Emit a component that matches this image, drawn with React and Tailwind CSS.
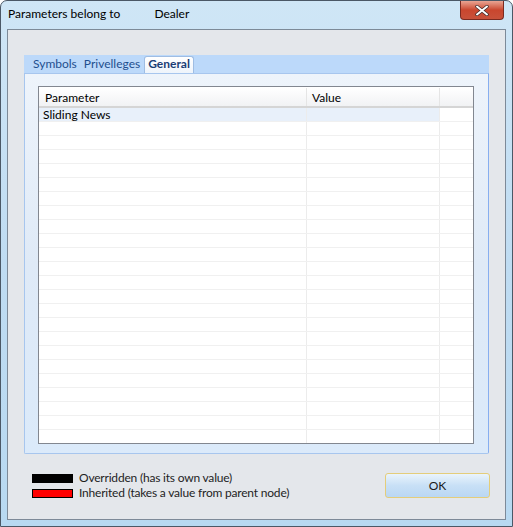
import React from 'react';

const rows = Array.from({ length: 24 }, (_, i) => i);

export default function App() {
  return (
    <div className="w-[513px] h-[527px] relative overflow-hidden rounded-t-[7px] border border-[#4b5866] bg-gradient-to-b from-[#cfe6f6] via-[#bfdcf2] to-[#b8d9f1] font-['Lato',sans-serif] text-[12px] text-black">
      {/* title bar */}
      <div className="h-[28px] flex items-center pl-[7px] pb-[2px]">
        <span>Parameters belong to</span>
        <span className="ml-[34px]">Dealer</span>
      </div>
      <div className="absolute right-[8px] top-0 w-[44px] h-[19px] rounded-b-[4px] border border-[#7a2a20] border-t-0 bg-gradient-to-b from-[#e8a493] via-[#c9462e] to-[#c8513a] flex items-center justify-center">
        <svg width="14" height="11" viewBox="0 0 14 11">
          <path d="M2 1.5 L12 9.5 M12 1.5 L2 9.5" stroke="#3b2a2a" strokeWidth="3.4" strokeLinecap="round" />
          <path d="M2 1.5 L12 9.5 M12 1.5 L2 9.5" stroke="#fff" strokeWidth="2" strokeLinecap="round" />
        </svg>
      </div>

      {/* client area */}
      <div className="mx-[6px] h-[491px] border border-[#7d8a98] bg-[#e4e7eb] pt-[25px] px-[16px] flex flex-col">
        {/* tab strip */}
        <div className="h-[18px] w-[465px] bg-[#bcd9fa] flex items-end pl-[9px] text-[#1f4f8f]">
          <span className="h-[16px] leading-[14px] pr-[7px]">Symbols</span>
          <span className="h-[16px] leading-[14px] pr-[4px]">Privelleges</span>
          <span className="h-[17px] leading-[14px] px-[3px] bg-gradient-to-b from-white to-[#eef4fb] border border-b-0 border-[#9fbde3] rounded-t-[3px] font-bold text-[#1b3d75]">
            General
          </span>
        </div>
        {/* tab panel */}
        <div className="w-[465px] h-[381px] border border-[#a7c6ee] border-r-[#86aef0] rounded-b-[2px] bg-gradient-to-b from-[#eef4fb] via-[#dfeaf7] to-[#dbeafa] pt-[12px] pl-[13px]">
          <div className="w-[436px] h-[358px] border border-[#828790] bg-white overflow-hidden">
            <div className="flex h-[20px] bg-gradient-to-b from-white to-[#f1f2f4] border-b-2 border-[#d5d5d5] mt-[1px]">
              <div className="w-[268px] pl-[6px] leading-[19px] border-r border-[#e5e5e5]">Parameter</div>
              <div className="w-[133px] pl-[5px] leading-[19px] border-r border-[#e5e5e5]">Value</div>
              <div className="flex-1" />
            </div>
            {rows.map((i) => (
              <div key={i} className="flex h-[14px] border-b border-[#f0f0f0]">
                <div className={`w-[268px] pl-[4px] leading-[13px] border-r border-[#ececec] ${i === 0 ? 'bg-[#e8f0fa]' : ''}`}>
                  {i === 0 ? 'Sliding News' : ''}
                </div>
                <div className={`w-[133px] border-r border-[#ececec] ${i === 0 ? 'bg-[#e8f0fa]' : ''}`} />
                <div className="flex-1" />
              </div>
            ))}
          </div>
        </div>

        {/* legend + ok */}
        <div className="flex items-start mt-[17px] pl-[8px]">
          <div className="flex flex-col gap-[1px] text-[#1e1e1e]">
            <div className="flex items-center h-[14px]">
              <div className="w-[41px] h-[9px] bg-black" />
              <span className="ml-[6px] leading-[14px] tracking-[-0.2px]">Overridden (has its own value)</span>
            </div>
            <div className="flex items-center h-[14px]">
              <div className="w-[41px] h-[9px] bg-[#ff0000] border border-black" />
              <span className="ml-[6px] leading-[14px] tracking-[-0.2px]">Inherited (takes a value from parent node)</span>
            </div>
          </div>
          <div className="ml-auto mr-[-1px] mt-[2px] w-[105px] h-[25px] rounded-[3px] border border-[#e4cd7a] bg-gradient-to-b from-[#eaf4fc] via-[#c8e0f6] to-[#bad7f3] flex items-center justify-center text-[#1a1a1a]">
            OK
          </div>
        </div>
      </div>
    </div>
  );
}
